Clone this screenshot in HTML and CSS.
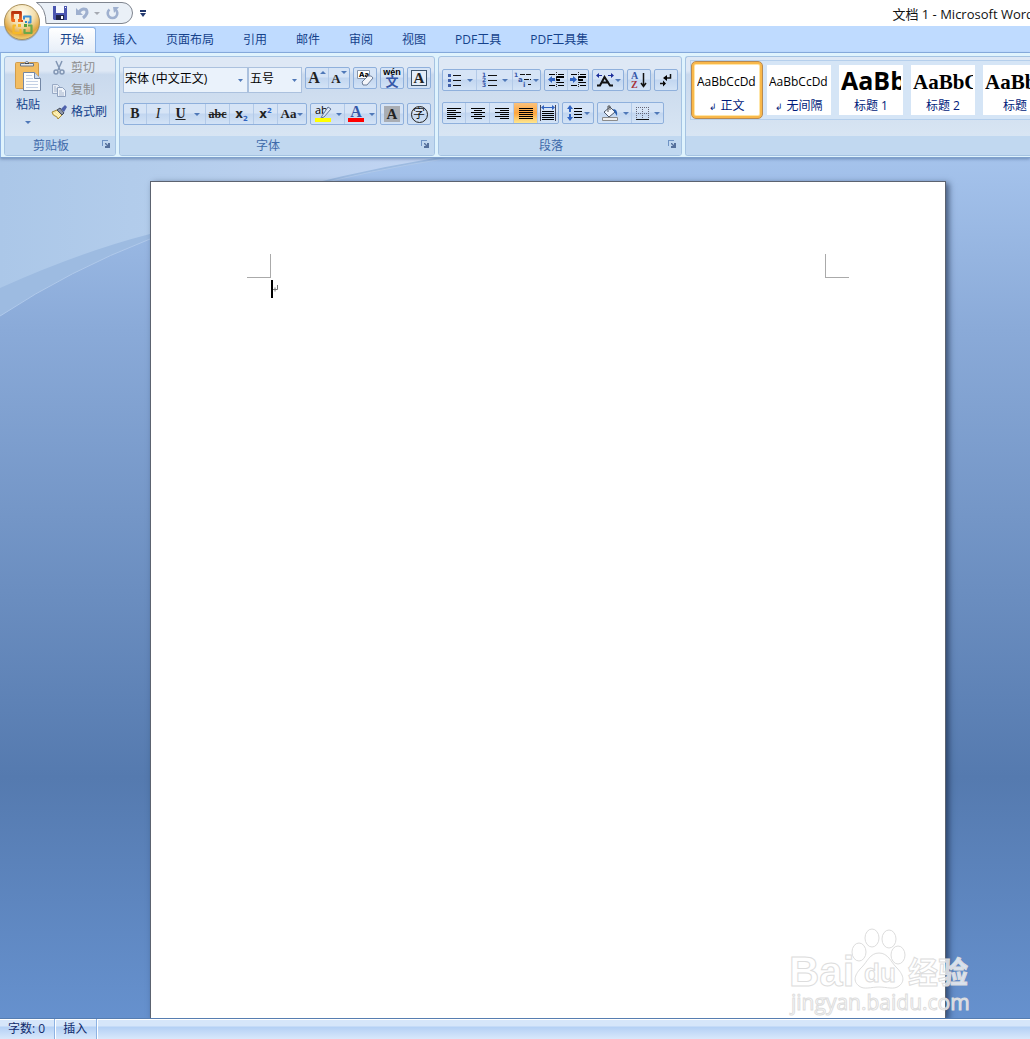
FILE: index.html
```html
<!DOCTYPE html>
<html lang="zh-CN">
<head>
<meta charset="utf-8">
<title>文档 1 - Microsoft Word</title>
<link rel="stylesheet" href="styles.css">
</head>
<body>
<header class="titlebar">
  <button class="office" aria-label="Office 按钮">
    <svg width="38" height="38" viewBox="0 0 38 38">
      <defs>
        <radialGradient id="orb" cx="50%" cy="25%" r="80%"><stop offset="0" stop-color="#fffdf2"/><stop offset=".45" stop-color="#f3dfae"/><stop offset=".75" stop-color="#dfa43c"/><stop offset="1" stop-color="#fbe58c"/></radialGradient>
        <linearGradient id="red" x2="0" y2="1"><stop offset="0" stop-color="#b8330e"/><stop offset="1" stop-color="#f26a1c"/></linearGradient>
      </defs>
      <circle cx="19" cy="20" r="18" fill="#7c8798" opacity=".5"/>
      <circle cx="19" cy="19" r="17.5" fill="url(#orb)" stroke="#a9905c"/>
      <g fill="none" stroke-linejoin="round">
        <path d="M12 17.500H9.500v-8h8v8H15" stroke="url(#red)" stroke-width="2.800"/>
        <path d="M21 16.500v-3h6.500v6H25" stroke="#3b8fd6" stroke-width="2"/>
        <path d="M13 22.500h-2.500v7.500h7v-4" stroke="#f6b929" stroke-width="2.200"/>
        <path d="M25 22.500h3.500v7.500h-7v-4" stroke="#6aa84a" stroke-width="2.200"/>
      </g>
      <path d="M18 17h2v2h-2z" fill="#d84a14"/><path d="M22 18h2v2h-2z" fill="#2f86cf"/><path d="M15 21h3v3h-3z" fill="#f6b929"/><path d="M21 21h3v3h-3z" fill="#56a03a"/>
    </svg>
  </button>
  <div class="quick">
    <svg class="quick-shape" width="97" height="22" viewBox="0 0 97 22"><path d="M.5.5H86a10.500 10.500 0 0 1 0 21H10Q10 6 .5.5z" fill="#eaf0f7" stroke="#7f858f"/></svg>
    <button aria-label="保存"><svg width="14" height="14" viewBox="0 0 14 14"><path d="M0 0h14v14H1l-1-1z" fill="#4a55b0"/><path d="M3 0h8v7H3z" fill="#f4f7ff"/><path d="M3 9h8v5H3z" fill="#1f2448"/><path d="M8 10h2v3H8z" fill="#fff"/><path d="M12 1h1v1h-1z" fill="#fff"/></svg></button>
    <button class="wide" aria-label="撤消"><svg width="13" height="13" viewBox="0 0 13 13"><path d="M0 1v7h7z" fill="#9fb0cf"/><path d="M3 5q3-4 7-2.500 3 4-3 8.500" fill="none" stroke="#9fb0cf" stroke-width="3"/></svg></button>
    <button class="narrow" aria-label="撤消列表"><i class="drop muted"></i></button>
    <button class="wide" aria-label="重复"><svg width="13" height="13" viewBox="0 0 13 13"><path d="M3.500 2.500a4.800 4.800 0 1 0 6 0" fill="none" stroke="#9fb0cf" stroke-width="2.600"/><path d="M7 0h6L8 6z" fill="#9fb0cf"/></svg></button>
    <button class="customize" aria-label="自定义快速访问工具栏"><svg width="6" height="7" viewBox="0 0 6 7"><path d="M0 0h6v2H0zM0 3h6L3 7z" fill="#22386e"/></svg></button>
  </div>
  <h1 class="title">文档 1 - Microsoft Word</h1>
</header>

<nav class="tabs">
  <a class="tab active" href="#home">开始</a>
  <a class="tab" href="#insert">插入</a>
  <a class="tab" href="#layout">页面布局</a>
  <a class="tab" href="#references">引用</a>
  <a class="tab" href="#mail">邮件</a>
  <a class="tab" href="#review">审阅</a>
  <a class="tab" href="#view">视图</a>
  <a class="tab" href="#pdf">PDF工具</a>
  <a class="tab" href="#pdfset">PDF工具集</a>
</nav>

<div class="ribbon" id="home">
  <section class="group clipboard">
    <div class="clip-body">
      <button class="paste">
        <svg width="28" height="32" viewBox="0 0 28 32"><rect x="1.500" y="2.500" width="23" height="26" rx="1" fill="#f2bd62" stroke="#d29c4b"/><path d="M6.500 6V3.500h4q2-4 5 0h4V6z" fill="#e5e9ee" stroke="#6a7686"/><path d="M11 3.500h4" stroke="#444"/><path d="M9.500 12.500h11l6 6v12h-17z" fill="#fdfefe" stroke="#7387a5"/><path d="M20.500 12.500v6h6" fill="#cfdbec" stroke="#7387a5"/><path d="M12 15.500h6M12 18.500h7M12 21.500h12M12 24.500h12M12 27.500h12" stroke="#c3d0e4"/></svg>
        <span>粘贴</span><i class="drop"></i>
      </button>
      <div class="clip-list">
        <button class="off"><svg width="16" height="16" viewBox="0 0 16 16"><path d="M5 1l4 9M11 1L7 10" stroke="#8296b4" stroke-width="1.500"/><circle cx="5" cy="12" r="2" fill="none" stroke="#8296b4" stroke-width="1.500"/><circle cx="11" cy="12" r="2" fill="none" stroke="#8296b4" stroke-width="1.500"/></svg>剪切</button>
        <button class="off"><svg width="16" height="16" viewBox="0 0 16 16"><path d="M1.500 2.500h5l2 2v7h-7z" fill="#e4ebf5" stroke="#99aac5"/><path d="M6.500 5.500h5l3 3v6h-8z" fill="#eef3fa" stroke="#8fa1be"/><path d="M8 9h3M8 11h5M8 13h5M3 5h2M3 7h3M3 9h3" stroke="#a6b5cc"/></svg>复制</button>
        <button><svg width="16" height="16" viewBox="0 0 16 16"><path d="M1 8l5-2 5 5-4 4q-1-3-3-3t-3-4z" fill="#f7e59b" stroke="#a58a3a"/><path d="M3 9l5 4M5 8l4 4" stroke="#fff6c8"/><path d="M6 6l3-2 4 5-2 2z" fill="#8d96a8" stroke="#434b5c"/><path d="M10 5l4-4 2 2-3 5z" fill="#4f62ac"/></svg>格式刷</button>
      </div>
    </div>
    <footer class="caption">剪贴板<button class="launch" aria-label="剪贴板设置"><svg width="8" height="8" viewBox="0 0 8 8"><path d="M0 .5h6M.5 0v6" stroke="#6f93c4"/><path d="M3 3h1l2 2V3h2v5H3V6h2L3 4z" fill="#55709c"/></svg></button></footer>
  </section>

  <section class="group font">
    <div class="row">
      <div class="combos">
        <select class="face" aria-label="字体"><option>宋体 (中文正文)</option></select>
        <select class="size" aria-label="字号"><option>五号</option></select>
      </div>
      <div class="set"><button class="w22 glyph flush" aria-label="增大字体"><span class="big">A</span><i class="tri up"></i></button><button class="w21 glyph flush" aria-label="缩小字体"><span class="small">A</span><i class="tri"></i></button></div>
      <div class="set"><button class="w22" aria-label="清除格式"><svg width="18" height="18" viewBox="0 0 18 18"><path d="M1.500 1.500h12v8h-12z" fill="#fff" stroke="#8794a8"/><text x="3" y="8" class="t7">Aa</text><path d="M6 13l6-6q4-1 5 2l-6 7-4 0z" fill="#f4f6fa" stroke="#6d7d98"/></svg></button></div>
      <div class="set"><button class="w22" aria-label="拼音指南"><svg width="20" height="20" viewBox="0 0 20 20"><text x="10" y="7" text-anchor="middle" class="t8">wén</text><text x="10" y="18" text-anchor="middle" class="cjk blue">文</text></svg></button></div>
      <div class="set"><button class="w22" aria-label="字符边框"><span class="boxed">A</span></button></div>
    </div>
    <div class="row">
      <div class="set">
        <button class="w22 glyph" aria-label="加粗"><b>B</b></button><button class="w23 glyph" aria-label="倾斜"><em>I</em></button><button class="w36 glyph" aria-label="下划线"><u>U</u><i class="drop"></i></button><button class="w24 glyph" aria-label="删除线"><s>abc</s></button><button class="w24 glyph" aria-label="下标"><span class="ex">x<sub>2</sub></span></button><button class="w24 glyph" aria-label="上标"><span class="ex">x<sup>2</sup></span></button><button class="w29 glyph tight" aria-label="更改大小写"><span>Aa</span><i class="drop"></i></button>
      </div>
      <div class="set">
        <button class="w33" aria-label="突出显示"><svg width="18" height="18" viewBox="0 0 18 18"><text x="1" y="9" class="t11">ab</text><path d="M8 11l6-9 3 2-7 8-3 1z" fill="#dce6f5" stroke="#62779c"/><path d="M1 13h16v4H1z" fill="#ff0"/></svg><i class="drop"></i></button><button class="w32" aria-label="字体颜色"><svg width="18" height="18" viewBox="0 0 18 18"><text x="9" y="12" text-anchor="middle" class="serif blue">A</text><path d="M1 13h16v4H1z" fill="#f00"/></svg><i class="drop"></i></button>
      </div>
      <div class="set"><button class="w22" aria-label="字符底纹"><span class="shaded">A</span></button></div>
      <div class="set"><button class="w22" aria-label="带圈字符"><span class="circled">字</span></button></div>
    </div>
    <footer class="caption">字体<button class="launch" aria-label="字体设置"><svg width="8" height="8" viewBox="0 0 8 8"><path d="M0 .5h6M.5 0v6" stroke="#6f93c4"/><path d="M3 3h1l2 2V3h2v5H3V6h2L3 4z" fill="#55709c"/></svg></button></footer>
  </section>

  <section class="group para">
    <div class="row">
      <div class="set">
        <button class="w33" aria-label="项目符号"><svg width="16" height="16" viewBox="0 0 16 16"><path d="M6 3.500h8M6 8.500h8M6 13.500h8" stroke="#111"/><path d="M1 2h3v3H1zM1 7h3v3H1zM1 12h3v3H1z" fill="#3f5fa9"/></svg><i class="drop"></i></button><button class="w36" aria-label="编号"><svg width="16" height="16" viewBox="0 0 16 16"><path d="M6 3.500h9M6 8.500h9M6 13.500h9" stroke="#111"/><text x="0" y="5" class="t6 blue">1</text><text x="0" y="10" class="t6 blue">2</text><text x="0" y="15" class="t6 blue">3</text></svg><i class="drop"></i></button><button class="w28 tight" aria-label="多级列表"><svg width="18" height="16" viewBox="0 0 18 16"><path d="M6 2.500h11M10 7.500h7M14 12.500h3" stroke="#111" stroke-dasharray="5 1"/><text x="0" y="5" class="t6 blue">1</text><text x="4" y="10" class="t7 blue">a</text><text x="9" y="15" class="t7 blue">i</text></svg><i class="drop"></i></button>
      </div>
      <div class="set">
        <button class="w22" aria-label="减少缩进量"><svg width="16" height="16" viewBox="0 0 16 16"><path d="M1 2.500h6M10 2.500h6M8 10.500h8M1 13.500h6M10 13.500h6" stroke="#000"/><path d="M8 4h8v2H8zM8 7h4v2H8z"/><path d="M8.500 0v16" stroke="#333" stroke-dasharray="1 1"/><path d="M0 7.500L4 4v2h3v3H4v2z" fill="#2f62c0"/></svg></button><button class="w21" aria-label="增加缩进量"><svg width="16" height="16" viewBox="0 0 16 16"><path d="M1 2.500h6M10 2.500h6M8 10.500h8M1 13.500h6M10 13.500h6" stroke="#000"/><path d="M8 4h8v2H8zM8 7h5v2H8z"/><path d="M8.500 0v16" stroke="#333" stroke-dasharray="1 1"/><path d="M7 7.500L3 4v2H0v3h3v2z" fill="#2f62c0"/></svg></button>
      </div>
      <div class="set"><button class="w30 tight" aria-label="中文版式"><svg width="18" height="14" viewBox="0 0 18 14"><path d="M1 12.500h3L8.500 4l5.500 8.500h3M5 9.500h8" fill="none" stroke="#111" stroke-width="2"/><path d="M0 2.500L3 0v2h3v1H3v2zM18 2.500L15 0v2h-3v1h3v2z" fill="#1b2d9a"/></svg><i class="drop"></i></button></div>
      <div class="set"><button class="w22" aria-label="排序"><svg width="16" height="18" viewBox="0 0 16 18"><text x="0" y="8" class="t10 blue">A</text><text x="0" y="17" class="t10 red">Z</text><path d="M12.500 2v13M10 12l2.500 3.500L15 12" fill="none" stroke="#111" stroke-width="1.500"/></svg></button></div>
      <div class="set"><button class="w22" aria-label="显示编辑标记"><svg width="12" height="14" viewBox="0 0 12 14"><path d="M10.500 1v4H5" fill="none" stroke="#111" stroke-width="1.500"/><path d="M3 5l4-3v6zM6 10.500L3 7.500v6z"/><path d="M0 10.500h4" stroke="#111" stroke-width="1.500"/></svg></button></div>
    </div>
    <div class="row">
      <div class="set">
        <button class="w22" aria-label="左对齐"><svg width="14" height="11" viewBox="0 0 14 11"><path d="M0 .5h14M0 2.500h9M0 4.500h14M0 6.500h9M0 8.500h14M0 10.500h9" stroke="#000"/></svg></button><button class="w24" aria-label="居中"><svg width="14" height="11" viewBox="0 0 14 11"><path d="M0 .5h14M3 2.500h8M0 4.500h14M3 6.500h8M0 8.500h14M3 10.500h8" stroke="#000"/></svg></button><button class="w24" aria-label="右对齐"><svg width="14" height="11" viewBox="0 0 14 11"><path d="M0 .5h14M5 2.500h9M0 4.500h14M5 6.500h9M0 8.500h14M5 10.500h9" stroke="#000"/></svg></button><button class="w24 pressed" aria-label="两端对齐"><svg width="14" height="11" viewBox="0 0 14 11"><path d="M0 .5h14M0 2.500h14M0 4.500h14M0 6.500h14M0 8.500h14M0 10.500h14" stroke="#000"/></svg></button><button class="w21" aria-label="分散对齐"><svg width="16" height="16" viewBox="0 0 16 16"><path d="M.5 0v16M15.500 0v16" stroke="#445"/><path d="M1 2.500L4 0v2h8V0l3 2.500L12 5V3H4v2z" fill="#2f62c0"/><path d="M2 6.500h12M2 8.500h12M2 10.500h12M2 12.500h12M2 14.500h12" stroke="#000"/></svg></button>
      </div>
      <div class="set"><button class="w30 tight" aria-label="行距"><svg width="16" height="16" viewBox="0 0 16 16"><path d="M7 3.500h8M7 6.500h8M7 9.500h8M7 12.500h8" stroke="#000"/><path d="M3 0l3 4H4v3H2V4H0zM3 16l3-4H4V9H2v3H0z" fill="#2f62c0"/></svg><i class="drop"></i></button></div>
      <div class="set">
        <button class="w33" aria-label="底纹"><svg width="18" height="16" viewBox="0 0 18 16"><path d="M3 7l6-5 5 5-6 5z" fill="#f4f7fc" stroke="#4a5568"/><path d="M7 7V1h2v4" fill="none" stroke="#555"/><path d="M12 4q5 0 4 7l-2-3z" fill="#2a5fb0"/><path d="M1.500 12.500h15v3h-15z" fill="#eee" stroke="#8b8b8b"/></svg><i class="drop"></i></button><button class="w32" aria-label="边框"><svg width="14" height="13" viewBox="0 0 14 13"><path d="M.5 0v12M6.500 0v12M12.500 0v12M0 .5h13M0 6.500h13" stroke="#667" stroke-dasharray="1 1"/><path d="M0 12.500h13" stroke="#111"/></svg><i class="drop"></i></button>
      </div>
    </div>
    <footer class="caption">段落<button class="launch" aria-label="段落设置"><svg width="8" height="8" viewBox="0 0 8 8"><path d="M0 .5h6M.5 0v6" stroke="#6f93c4"/><path d="M3 3h1l2 2V3h2v5H3V6h2L3 4z" fill="#55709c"/></svg></button></footer>
  </section>

  <section class="group styles">
    <div class="gallery">
      <button class="style chosen"><span class="sample">AaBbCcDd</span><span><small>↲</small> 正文</span></button>
      <button class="style"><span class="sample">AaBbCcDd</span><span><small>↲</small> 无间隔</span></button>
      <button class="style"><span class="sample h-one">AaBb</span><span>标题 1</span></button>
      <button class="style"><span class="sample h-two">AaBbC</span><span>标题 2</span></button>
      <button class="style"><span class="sample h-two">AaBbC</span><span>标题</span></button>
    </div>
    <footer class="caption"></footer>
  </section>
</div>

<main class="workspace">
  <svg class="swoosh" width="460" height="160" viewBox="0 0 460 160">
    <defs><linearGradient id="haze" x2="1" y2="0"><stop offset="0" stop-color="#abc7e8"/><stop offset=".3" stop-color="#b2cceb"/><stop offset="1" stop-color="#c2d5f3"/></linearGradient></defs>
    <path d="M0 0H450Q290 24 150 81Q70 112 0 158z" fill="#9dbbe1"/>
    <path d="M0 0H435Q280 26 150 76Q80 94 0 130z" fill="url(#haze)"/>
    <path d="M0 158Q70 112 150 81Q290 24 450 0" fill="none" stroke="#b0c9ea"/>
  </svg>
  <article class="paper">
    <div class="marks"><i class="mark left"></i><i class="mark right"></i></div>
    <p class="text"><i class="caret"></i><svg width="6" height="8" viewBox="0 0 6 8"><path d="M4.500 0v4.500H0M2 2.500v4" fill="none" stroke="#777"/></svg></p>
  </article>
  <svg class="watermark" width="190" height="92" viewBox="0 0 190 92">
    <g class="wm">
      <text x="5" y="60" class="wm-logo">Bai</text>
      <path d="M95 27c9 0 12 9 17 14s11 13 3 19c-5 4-12 1-20 1s-15 3-20-1c-8-6-2-14 3-19s8-14 17-14z"/>
      <ellipse cx="75" cy="26" rx="7" ry="9"/><ellipse cx="88" cy="12" rx="7" ry="9"/><ellipse cx="105" cy="13" rx="7" ry="9"/><ellipse cx="114" cy="29" rx="7" ry="9"/>
      <text x="80" y="56" class="wm-du">du</text>
      <text x="124" y="57" class="wm-cn">经验</text>
      <text x="7" y="84" class="wm-url">jingyan.baidu.com</text>
    </g>
  </svg>
</main>

<footer class="status"><span>字数: 0</span><span>插入</span></footer>
</body>
</html>
```

FILE: styles.css
```css
* { box-sizing: border-box; }
body {
  margin: 0;
  height: 100vh;
  display: flex;
  flex-direction: column;
  overflow: hidden;
  background: #bfdbff;
  color: #15428b;
  font: 12px/16px "Open Sans", "Noto Sans CJK SC", sans-serif;
}
button {
  margin: 0;
  padding: 0;
  border: 0;
  background: none;
  color: inherit;
  font: inherit;
}
svg { display: block; flex: none; }

/* Title bar */
.titlebar {
  position: relative;
  flex: none;
  height: 26px;
  display: flex;
  align-items: center;
  padding-left: 36px;
  background: #fff;
}
.office {
  position: absolute;
  z-index: 2;
  left: 3px;
  top: 3px;
}
.quick {
  position: relative;
  display: flex;
  align-items: center;
  padding-left: 14px;
  height: 22px;
}
.quick-shape { position: absolute; left: 0; top: 0; }
.quick button {
  position: relative;
  width: 20px;
  display: flex;
  justify-content: center;
}
.quick button.wide { width: 24px; }
.quick button.narrow { width: 6px; }
.quick button.customize { width: 38px; }
.title {
  flex: 1;
  margin: 2px -4px 0 0;
  color: #111;
  font-size: 13px;
  font-weight: 400;
  text-align: right;
  white-space: nowrap;
}

/* Tabs */
.tabs {
  flex: none;
  display: flex;
  gap: 5px;
  height: 27px;
  padding: 1px 0 0 48px;
  border-bottom: 1px solid #8db2e3;
}
.tab {
  height: 26px;
  padding: 5px 12px;
  color: #15428b;
  text-decoration: none;
  white-space: nowrap;
}
.tab.active {
  padding: 4px 11px;
  border: 1px solid #8db2e3;
  border-bottom: 0;
  border-radius: 3px 3px 0 0;
  background: linear-gradient(#fff, #e6eef8);
}

/* Ribbon */
.ribbon {
  position: relative;
  flex: none;
  display: flex;
  gap: 3px;
  height: 105px;
  padding: 3px 0 1px 3px;
  border-left: 1px solid #8db2e3;
  border-bottom: 1px solid #7fa0cc;
  background: #dff3fd;
  box-shadow: 0 1px 3px rgba(50, 80, 130, .5);
}
.group {
  flex: none;
  display: flex;
  flex-direction: column;
  border: 1px solid #a5c3e2;
  border-radius: 3px;
  background: linear-gradient(#dee8f5 0 14%, #c9d9ed 18%, #d8e5f3 80%);
  overflow: hidden;
}
.clipboard { width: 112px; }
.font { width: 316px; gap: 10px; padding-top: 10px; }
.para { width: 244px; gap: 11px; padding-top: 12px; }
.styles { flex: 1; border-right: 0; border-radius: 3px 0 0 3px; }
.caption {
  position: relative;
  height: 19px;
  margin-top: auto;
  padding-right: 18px;
  background: #c1d8f0;
  color: #3e6aaa;
  line-height: 19px;
  text-align: center;
}
.launch { position: absolute; right: 5px; top: 4px; }

/* Clipboard group */
.clip-body { display: flex; }
.paste {
  width: 46px;
  display: flex;
  flex-direction: column;
  align-items: center;
  padding-top: 3px;
}
.paste span { margin: 5px 0 8px; }
.clip-list button {
  height: 22px;
  display: flex;
  align-items: center;
  gap: 4px;
}
.clip-list .off { color: #8d8d8d; }

/* Tool rows */
.row { display: flex; gap: 3px; padding-left: 3px; align-items: flex-start; }
.font .row:first-child { height: 26px; }
.combos { display: flex; }
select {
  appearance: none;
  height: 26px;
  padding: 0 0 2px 1px;
  border: 1px solid #abc1de;
  border-radius: 0;
  color: #000;
  font: inherit;
  background: #eaf2fb url("data:image/svg+xml,%3Csvg xmlns='http://www.w3.org/2000/svg' width='5' height='3'%3E%3Cpath d='M0 0h5L2.5 3z' fill='%234f78b8'/%3E%3C/svg%3E") no-repeat right 4px center;
}
.face { width: 125px; }
.size { width: 54px; }
.set {
  display: flex;
  height: 22px;
  border: 1px solid #8fb0dc;
  border-radius: 2px;
  background: linear-gradient(#d6e4f6 0 45%, #c2d6f0 50%, #d3e3f6);
}
.set button {
  height: 20px;
  display: flex;
  align-items: center;
  justify-content: center;
  gap: 4px;
}
.row + .row .set + .set:nth-child(2) { margin-left: 0; }
.set button + button { border-left: 1px solid #b3cae8; }
.set .tight { gap: 1px; }
.set .flush { gap: 0; }
.set .pressed { background: linear-gradient(#fbc27c, #fda63f 50%, #fee78f); }
.w21 { width: 21px; }
.w22 { width: 22px; }
.w23 { width: 23px; }
.w24 { width: 24px; }
.w28 { width: 28px; }
.w29 { width: 29px; }
.w30 { width: 30px; }
.w32 { width: 32px; }
.w33 { width: 33px; }
.w36 { width: 36px; }
.set .w36.glyph { gap: 8px; }
.drop, .tri {
  flex: none;
  width: 0;
  height: 0;
  border: 3px solid transparent;
  border-top-color: #4f78b8;
  border-bottom: 0;
}
.drop.muted { border-top-color: #a5a9b2; }
.tri { align-self: flex-start; margin-top: 3px; }
.tri.up { border-top: 0; border-bottom: 3px solid #4f78b8; }

/* Letter-based tool faces */
.set .glyph { font: bold 14px/18px "Liberation Serif", serif; color: #222; }
.glyph em { font-weight: 400; }
.glyph s { font-size: 12px; }
.glyph.tight span { font-size: 13px; }
.big { font-size: 16px; }
.small { font-size: 13px; padding-top: 2px; }
.ex { font: bold 12px/14px "DejaVu Sans", sans-serif; }
.ex sub, .ex sup { font-size: 7px; line-height: 0; color: #2f62c0; }
.boxed, .shaded {
  width: 16px;
  height: 16px;
  color: #222;
  font: bold 15px/16px "Liberation Serif", serif;
  text-align: center;
}
.boxed { border: 1px solid #3a5068; line-height: 14px; background: #e4edf8; }
.shaded { background: #a9adb3; }
.circled {
  width: 17px;
  height: 17px;
  border: 1px solid #222;
  border-radius: 50%;
  color: #111;
  line-height: 14px;
  text-align: center;
}
.t6 { font: bold 6px "DejaVu Sans", sans-serif; }
.t7 { font: bold 7px "DejaVu Sans", sans-serif; }
.t8 { font: bold 9px "Liberation Sans", sans-serif; }
.t10 { font: bold 10px "Liberation Serif", serif; }
.t11 { font: 11px "Open Sans", sans-serif; }
.cjk { font: bold 13px "Noto Sans CJK SC", sans-serif; }
.serif { font: bold 16px "Liberation Serif", serif; }
.blue { fill: #3557a8; }
.red { fill: #a8323a; }

/* Style gallery */
.gallery {
  display: flex;
  gap: 8px;
  height: 60px;
  margin: 3px 0 0 4px;
  padding: 4px 0 4px 4px;
  border: 1px solid #b5cfec;
  border-right: 0;
  background: #d5e5f6;
}
.style {
  flex: none;
  width: 64px;
  height: 50px;
  padding: 0 2px;
  background: #fff;
  color: #001a7a;
  text-align: center;
  white-space: nowrap;
  overflow: hidden;
}
.style.chosen {
  border-radius: 1px;
  outline: 1px solid #b98a50;
  outline-offset: 3px;
  box-shadow: 0 0 0 1px #ffe6a8, 0 0 0 3px #f9b84a;
}
.style span { display: block; }
.style small { font-size: 9px; }
.style .sample {
  height: 32px;
  color: #000;
  line-height: 32px;
  text-align: left;
  overflow: hidden;
}
.style .h-one { font: bold 25px/29px "Open Sans", sans-serif; }
.style .h-two { font: bold 21px/32px "Liberation Serif", serif; }

/* Document area */
.workspace {
  flex: 1;
  min-height: 0;
  display: flex;
  padding: 23px 84px 0 150px;
  background: linear-gradient(#a5c3ec, #8aaad8 20%, #557aaf 72%, #6691ce);
  overflow: hidden;
  position: relative;
  z-index: 0;
}
.ribbon { z-index: 1; }
.swoosh { position: absolute; left: 0; top: 0; }
.paper {
  position: relative;
  flex: 1;
  padding: 72px 96px 0;
  border: 1px solid #5c6370;
  border-bottom: 0;
  background: #fff;
  box-shadow: 3px 2px 6px rgba(20, 35, 65, .65);
}
.marks { display: flex; justify-content: space-between; }
.mark { width: 24px; height: 24px; border-bottom: 1px solid #aaa; }
.mark.left { border-right: 1px solid #aaa; }
.mark.right { border-left: 1px solid #aaa; }
.text { display: flex; align-items: center; margin: 2px 24px; }
.caret { width: 2px; height: 18px; background: #000; }
.watermark { position: absolute; right: 56px; bottom: 0; }
.wm { fill: #fff; fill-opacity: .75; stroke: #ddd; stroke-width: 1; }
.wm-logo { font: bold 42px "Liberation Sans", sans-serif; }
.wm-du { font: bold 26px "Liberation Sans", sans-serif; }
.wm-cn { font: bold 30px "Noto Sans CJK SC", sans-serif; }
.wm-url { font: 21px "Open Sans", sans-serif; }

/* Status bar */
.status {
  flex: none;
  display: flex;
  height: 21px;
  border-top: 1px solid #567db1;
  background: linear-gradient(#fff 0 1px, #d6e6fa 1px 7px, #b4d0f5 8px, #d8e8fb);
  color: #102a6b;
  line-height: 19px;
}
.status span { padding: 0 9px 0 8px; border-right: 1px solid #8db2e3; box-shadow: 1px 0 #fff; }
```
